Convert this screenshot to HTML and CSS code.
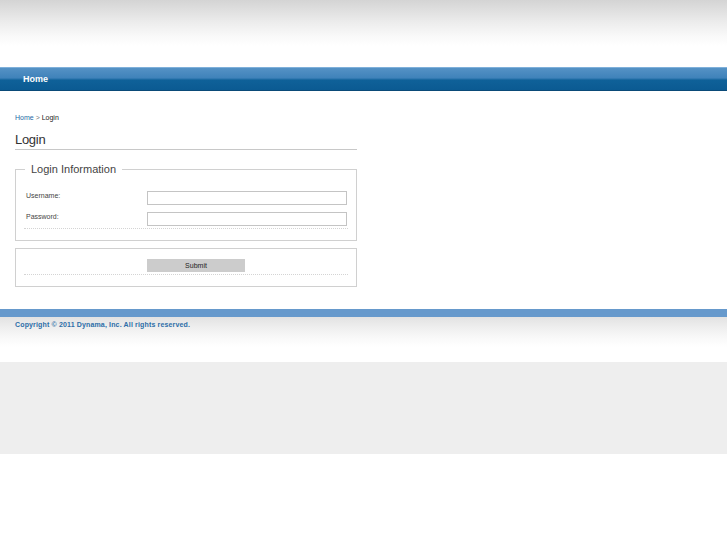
FILE: index.html
```html
<!DOCTYPE html>
<html>
<head>
<meta charset="utf-8">
<title>Login</title>
<link rel="stylesheet" href="styles.css">
</head>
<body>
<div class="header"></div>
<div class="nav"><a class="nav-link" href="#">Home</a></div>
<div class="content">
  <div class="breadcrumb"><a href="#">Home</a> <span class="sep">&gt;</span> Login</div>
  <h1 class="title">Login</h1>
  <form class="login-form">
    <fieldset class="box">
      <legend class="legend">Login Information</legend>
      <div class="rows">
        <div class="row"><label class="label">Username:</label><input class="field" type="text"></div>
        <div class="row"><label class="label">Password:</label><input class="field" type="password"></div>
      </div>
    </fieldset>
    <fieldset class="box box-actions">
      <div class="rows actions">
        <div class="row"><span class="label"></span><button class="submit" type="button">Submit</button></div>
      </div>
    </fieldset>
  </form>
</div>
<div class="footer-bar"></div>
<div class="footer">Copyright © 2011 Dynama, Inc. All rights reserved.</div>
<div class="bottom"></div>
</body>
</html>
```

FILE: styles.css
```css
html, body {
  margin: 0;
  padding: 0;
  background: #fff;
  font-family: "Liberation Sans", Arial, sans-serif;
  color: #333;
}
.header {
  height: 67px;
  background: linear-gradient(to bottom, #d4d4d4 0px, #ececec 22px, #f9f9f9 36px, #ffffff 46px, #ffffff 67px);
}
.nav {
  height: 24px;
  box-sizing: border-box;
  border-top: 1px solid #7fb0da;
  border-bottom: 1px solid #0a4a78;
  background: linear-gradient(to bottom, #5592c5 0%, #3f82ba 45%, #0f6199 55%, #0b5a92 100%);
  padding-left: 23px;
  display: flex;
  align-items: center;
}
.nav-link {
  color: #fff;
  font-weight: bold;
  font-size: 9px;
  text-decoration: none;
  margin-top: -1px;
}
.content {
  padding: 21px 0 0 15px;
  width: 342px;
}
.breadcrumb {
  font-size: 7px;
  color: #222;
  height: 12px;
  line-height: 12px;
}
.breadcrumb a {
  color: #1c6aa6;
  text-decoration: none;
}
.sep { color: #777; }
.title {
  margin: 8px 0 0 0;
  font-size: 13px;
  font-weight: normal;
  color: #333;
  letter-spacing: -0.3px;
  line-height: 15px;
  padding-bottom: 2px;
  border-bottom: 1px solid #c8c8c8;
}
.login-form {
  margin-top: 13px;
}
.box {
  margin: 0;
  padding: 0 8px 11px 8px;
  border: 1px solid #d0d0d0;
  min-width: 0;
}
.legend {
  font-size: 11px;
  color: #444;
  padding: 0 6px 0 6px;
  margin-left: 1px;
  line-height: 13px;
  letter-spacing: 0;
}
.rows {
  border-bottom: 1px dotted #d4d4d4;
  padding-top: 15px;
  padding-bottom: 2px;
  display: flex;
  flex-direction: column;
  gap: 7px;
}
.row {
  display: grid;
  grid-template-columns: 123px 200px;
  align-items: start;
}
.label {
  font-size: 7px;
  color: #444;
  padding-left: 2px;
  padding-top: 1px;
}
.field {
  width: 200px;
  height: 14px;
  box-sizing: border-box;
  border: 1px solid #c4c4c4;
  margin: 0;
  padding: 0 2px;
  background: #fff;
}
.box-actions {
  margin-top: 7px;
  padding-bottom: 11px;
}
.actions {
  padding-top: 10px;
  padding-bottom: 2px;
}
.submit {
  width: 98px;
  height: 13px;
  margin: 0;
  padding: 0;
  border: none;
  background: #cccccc;
  color: #222;
  font-family: "Liberation Sans", Arial, sans-serif;
  font-size: 7px;
  line-height: 13px;
}
.footer-bar {
  margin-top: 22px;
  height: 8px;
  background: #6699cc;
}
.footer {
  height: 45px;
  box-sizing: border-box;
  padding: 4px 0 0 15px;
  font-size: 7px;
  font-weight: bold;
  color: #2c6ea8;
  letter-spacing: 0.15px;
  background: linear-gradient(to bottom, #e2e2e2 0px, #eeeeee 10px, #f8f8f8 20px, #ffffff 30px);
}
.bottom {
  height: 92px;
  background: #eeeeee;
}
```
